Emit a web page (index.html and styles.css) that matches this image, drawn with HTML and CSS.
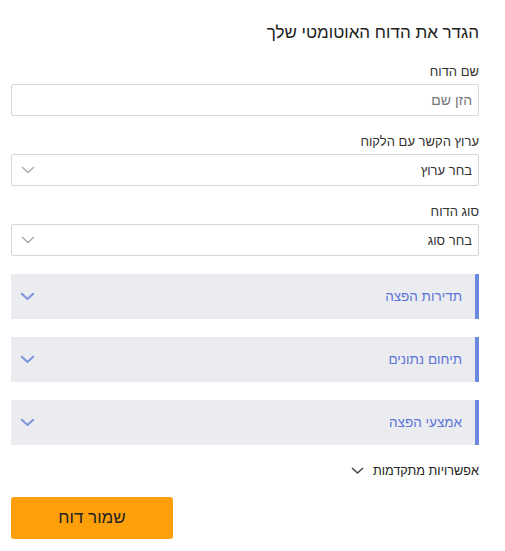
FILE: index.html
```html
<!DOCTYPE html>
<html lang="he" dir="rtl">
<head>
<meta charset="utf-8">
<link rel="stylesheet" href="styles.css">
</head>
<body>
<div class="form">
  <h1 class="title">הגדר את הדוח האוטומטי שלך</h1>
  <div class="field">
    <label class="label">שם הדוח</label>
    <div class="input"><span class="placeholder">הזן שם</span></div>
  </div>
  <div class="field">
    <label class="label">ערוץ הקשר עם הלקוח</label>
    <div class="input select"><span>בחר ערוץ</span>
      <svg class="chev grey" width="14" height="8" viewBox="0 0 14 8"><path d="M1 1l6 5.5L13 1" fill="none" stroke="currentColor" stroke-width="1.3"/></svg>
    </div>
  </div>
  <div class="field">
    <label class="label">סוג הדוח</label>
    <div class="input select"><span>בחר סוג</span>
      <svg class="chev grey" width="14" height="8" viewBox="0 0 14 8"><path d="M1 1l6 5.5L13 1" fill="none" stroke="currentColor" stroke-width="1.3"/></svg>
    </div>
  </div>
  <div class="acc"><span>תדירות הפצה</span>
    <svg class="chev blue" width="15" height="9" viewBox="0 0 15 9"><path d="M1.2 1.2l6.3 5.8 6.3-5.8" fill="none" stroke="currentColor" stroke-width="2"/></svg>
  </div>
  <div class="acc"><span>תיחום נתונים</span>
    <svg class="chev blue" width="15" height="9" viewBox="0 0 15 9"><path d="M1.2 1.2l6.3 5.8 6.3-5.8" fill="none" stroke="currentColor" stroke-width="2"/></svg>
  </div>
  <div class="acc"><span>אמצעי הפצה</span>
    <svg class="chev blue" width="15" height="9" viewBox="0 0 15 9"><path d="M1.2 1.2l6.3 5.8 6.3-5.8" fill="none" stroke="currentColor" stroke-width="2"/></svg>
  </div>
  <div class="advanced"><span>אפשרויות מתקדמות</span>
    <svg class="chev dark" width="13" height="8" viewBox="0 0 13 8"><path d="M1 1l5.5 5 5.5-5" fill="none" stroke="currentColor" stroke-width="1.5"/></svg>
  </div>
  <div class="actions"><button class="save">שמור דוח</button></div>
</div>
</body>
</html>
```
FILE: styles.css
```css
html, body { margin: 0; padding: 0; background: #fff; }
body { font-family: "Liberation Sans", Arial, sans-serif; color: #333; }
.form {
  margin: 0 26px 0 11px;
  padding-top: 22px;
  display: flex;
  flex-direction: column;
  gap: 18px;
}
.title {
  margin: 0 0 2px 0;
  font-size: 17px;
  font-weight: normal;
  line-height: 22px;
  color: #222;
}
.field { display: flex; flex-direction: column; gap: 4px; }
.label { font-size: 13px; line-height: 16px; color: #333; }
.input {
  height: 32px;
  box-sizing: border-box;
  border: 1px solid #d6d6d6;
  border-radius: 2px;
  display: flex;
  align-items: center;
  justify-content: space-between;
  padding: 0 6px 0 9px;
  font-size: 13px;
  color: #333;
}
.placeholder { color: #777; font-size: 14px; }
.chev { display: block; }
.grey { color: #a8a8a8; }
.blue { color: #7c93dc; }
.dark { color: #444; }
.acc {
  height: 45px;
  box-sizing: border-box;
  background: #ebecf0;
  border-right: 4px solid #6a88df;
  display: flex;
  align-items: center;
  justify-content: space-between;
  padding: 0 13px 0 9px;
  font-size: 13.5px;
  color: #5b74d8;
}
.advanced {
  display: flex;
  align-items: center;
  gap: 9px;
  font-size: 12.7px;
  line-height: 16px;
  color: #222;
}
.actions { display: flex; justify-content: flex-end; }
.save {
  width: 162px;
  height: 42px;
  border: none;
  border-radius: 3px;
  background: #ffa00a;
  font-family: "Liberation Sans", Arial, sans-serif;
  font-size: 17px;
  color: #222;
  cursor: pointer;
}
```
